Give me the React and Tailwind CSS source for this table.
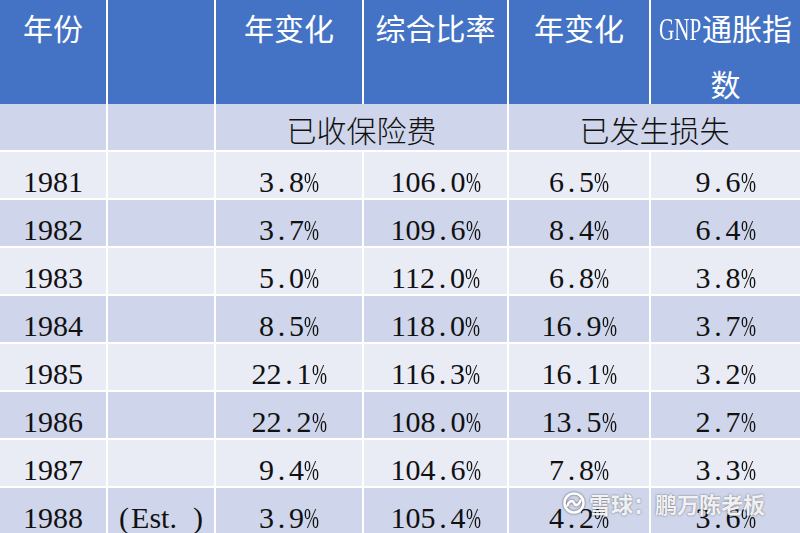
import React from "react";

const COLS = "grid grid-cols-[106px_106px_146px_143px_140px_149px] gap-x-[2px]";
const serif = "font-['Liberation_Serif','Noto_Sans_CJK_SC',serif]";
const cjk = "font-['Noto_Sans_CJK_SC','Liberation_Serif',sans-serif]";

function Num({ value }) {
  return (
    <span className="whitespace-nowrap">
      {value.split("").map((c, i) => {
        if (c === ".")
          return (
            <span key={i} className="inline-block w-[15px] text-center">
              .
            </span>
          );
        if (c === "%")
          return (
            <span key={i} className="inline-block w-[15px] text-left">
              <span className="inline-block origin-left [transform:scaleX(0.6)]">%</span>
            </span>
          );
        return <span key={i}>{c}</span>;
      })}
    </span>
  );
}

const rows = [
  ["1981", "", "3.8%", "106.0%", "6.5%", "9.6%"],
  ["1982", "", "3.7%", "109.6%", "8.4%", "6.4%"],
  ["1983", "", "5.0%", "112.0%", "6.8%", "3.8%"],
  ["1984", "", "8.5%", "118.0%", "16.9%", "3.7%"],
  ["1985", "", "22.1%", "116.3%", "16.1%", "3.2%"],
  ["1986", "", "22.2%", "108.0%", "13.5%", "2.7%"],
  ["1987", "", "9.4%", "104.6%", "7.8%", "3.3%"],
  ["1988", "est", "3.9%", "105.4%", "4.2%", "3.6%"],
];

function HeaderCell({ children }) {
  return (
    <div className={`bg-[#4472C4] text-white text-[30px] leading-[54px] text-center ${cjk}`}>
      {children}
    </div>
  );
}

function XueqiuLogo() {
  return (
    <svg width="24" height="22" viewBox="0 0 24 22" className="drop-shadow-[0_0_1px_rgba(0,0,0,0.6)]">
      <circle cx="12" cy="11" r="9.5" fill="none" stroke="white" strokeWidth="2.6" />
      <path
        d="M5.5 13.5 C7 8.5 11 8 12 11 C13 14 17 13.5 18.5 8.5"
        fill="none"
        stroke="white"
        strokeWidth="2.6"
        strokeLinecap="round"
      />
    </svg>
  );
}

export default function App() {
  return (
    <div className="relative w-[800px] h-[533px] overflow-hidden bg-white flex flex-col">
      {/* Header */}
      <div className={`${COLS} h-[101px] shrink-0`}>
        <HeaderCell>年份</HeaderCell>
        <HeaderCell></HeaderCell>
        <HeaderCell>年变化</HeaderCell>
        <HeaderCell>综合比率</HeaderCell>
        <HeaderCell>年变化</HeaderCell>
        <HeaderCell>
          <span className="inline-block w-[43px] text-left align-baseline">
            <span className={`inline-block origin-left text-[32px] [transform:scaleX(0.66)] ${serif}`}>GNP</span>
          </span>
          通胀指数
        </HeaderCell>
      </div>

      {/* Sub header */}
      <div className={`${COLS} h-[46px] mt-[3px] shrink-0`}>
        <div className="bg-[#CFD5EA]"></div>
        <div className="bg-[#CFD5EA]"></div>
        <div className={`col-span-2 bg-[#CFD5EA] text-center text-[30px] leading-[30px] pt-[10px] font-light text-[#111] ${cjk}`}>
          已收保险费
        </div>
        <div className={`col-span-2 bg-[#CFD5EA] text-center text-[30px] leading-[30px] pt-[10px] font-light text-[#111] ${cjk}`}>
          已发生损失
        </div>
      </div>

      {/* Data rows */}
      {rows.map((r, i) => {
        const bg = i % 2 === 0 ? "bg-[#E9EBF5]" : "bg-[#CFD5EA]";
        return (
          <div key={r[0]} className={`${COLS} h-[46px] mt-[2px] shrink-0`}>
            {r.map((v, j) => (
              <div
                key={j}
                className={`${bg} text-center text-[30px] leading-[30px] pt-[15px] text-[#111] ${serif}`}
              >
                {j === 0 ? (
                  v
                ) : v === "est" ? (
                  <span className="whitespace-nowrap">
                    (<span className="ml-[2px]">Est.</span>
                    <span className="ml-[16px]">)</span>
                  </span>
                ) : v ? (
                  <Num value={v} />
                ) : null}
              </div>
            ))}
          </div>
        );
      })}

      {/* Watermark */}
      <div className="absolute left-[562px] top-[491px] flex items-center gap-[3px]">
        <XueqiuLogo />
        <span
          className={`text-[22px] leading-[24px] font-bold text-white/90 whitespace-nowrap [text-shadow:0_0_2px_rgba(0,0,0,0.55)] ${cjk}`}
        >
          雪球：鹏万陈老板
        </span>
      </div>
    </div>
  );
}
